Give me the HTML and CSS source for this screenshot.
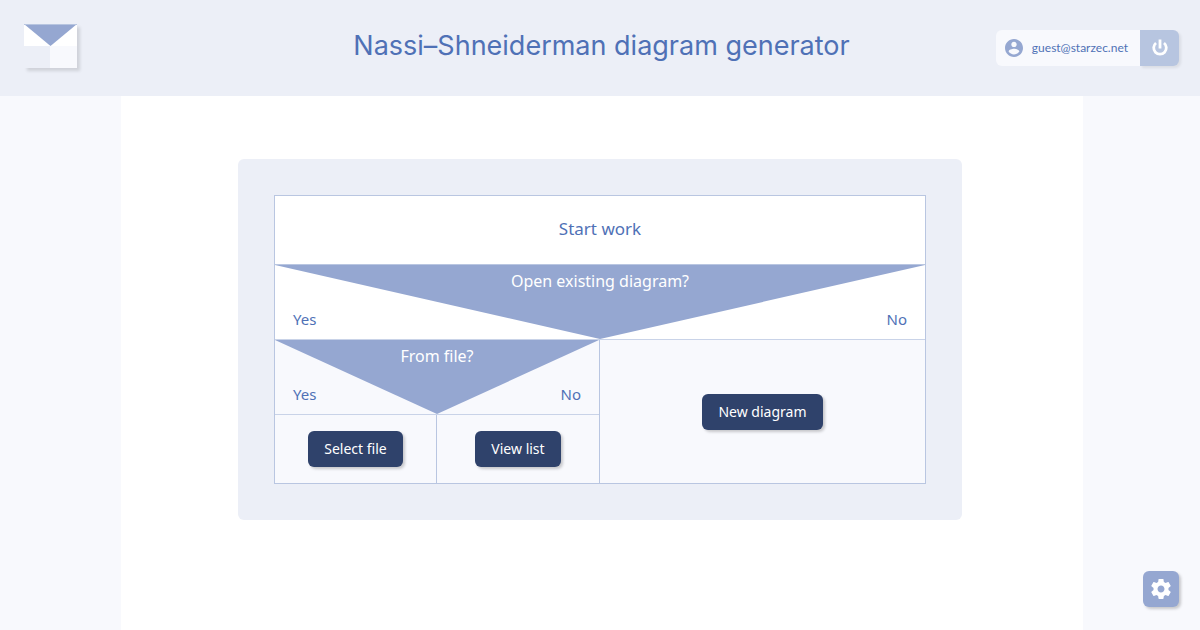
FILE: index.html
```html
<!DOCTYPE html>
<html lang="en">
<head>
<meta charset="utf-8">
<meta name="viewport" content="width=device-width, initial-scale=1">
<title>Nassi–Shneiderman diagram generator</title>
<link rel="stylesheet" href="styles.css">
</head>
<body>
<header class="header">
  <a class="logo" href="#" aria-label="Home">
    <svg class="logo-mark" viewBox="0 0 53 44" width="53" height="44" aria-hidden="true">
      <rect width="53" height="22" fill="#fff"/>
      <rect y="22" width="26" height="22" fill="#eceff7"/>
      <rect x="26" y="22" width="27" height="22" fill="#f8f9fd"/>
      <path d="M0 0H53L26.500 22Z" fill="#95a7d1"/>
      <path d="M0 .5H53" stroke="#b7c5e0"/>
    </svg>
  </a>
  <h1 class="title">Nassi–Shneiderman diagram generator</h1>
  <div class="account">
    <span class="user">
      <svg viewBox="2 2 20 20" width="18" height="18" aria-hidden="true"><path fill="#95a7d1" d="M12 2C6.480 2 2 6.480 2 12s4.480 10 10 10 10-4.480 10-10S17.520 2 12 2zm0 3c1.660 0 3 1.340 3 3s-1.340 3-3 3-3-1.340-3-3 1.340-3 3-3zm0 14.200c-2.500 0-4.710-1.280-6-3.220.030-1.990 4-3.080 6-3.080 1.990 0 5.970 1.090 6 3.080-1.290 1.940-3.500 3.220-6 3.220z"/></svg>
      guest@starzec.net
    </span>
    <button class="logout" type="button" aria-label="Log out">
      <svg viewBox="0 0 20 20" width="20" height="20" fill="none" stroke="#fff" stroke-width="2.800" aria-hidden="true"><path d="M10 1.500V10.500"/><path d="M6 5A6.300 6.300 0 1 0 14 5"/></svg>
    </button>
  </div>
</header>
<main class="main">
  <section class="panel">
    <div class="chart">
      <div class="start">Start work</div>
      <div class="condition">
        <svg class="wedge" viewBox="0 0 100 100" preserveAspectRatio="none" aria-hidden="true"><path d="M0 0H100L50 100Z" fill="#95a7d1"/></svg>
        <span class="question">Open existing diagram?</span>
        <span class="yes">Yes</span>
        <span class="no">No</span>
      </div>
      <div class="branches">
        <div class="branch">
          <div class="condition">
            <svg class="wedge" viewBox="0 0 100 100" preserveAspectRatio="none" aria-hidden="true"><path d="M0 0H100L50 100Z" fill="#95a7d1"/></svg>
            <span class="question">From file?</span>
            <span class="yes">Yes</span>
            <span class="no">No</span>
          </div>
          <div class="branches">
            <div class="branch leaf"><button class="btn" type="button">Select file</button></div>
            <div class="branch leaf"><button class="btn" type="button">View list</button></div>
          </div>
        </div>
        <div class="branch leaf"><button class="btn" type="button">New diagram</button></div>
      </div>
    </div>
  </section>
</main>
<button class="settings" type="button" aria-label="Settings">
  <svg viewBox="0 0 24 24" width="24" height="24" aria-hidden="true"><path fill="#fff" d="M19.430 12.980c.040-.320.070-.640.070-.980s-.030-.660-.070-.980l2.110-1.650c.190-.150.240-.420.120-.640l-2-3.460c-.120-.220-.390-.300-.610-.220l-2.490 1c-.520-.400-1.080-.730-1.690-.980l-.380-2.650C14.460 2.180 14.250 2 14 2h-4c-.250 0-.460.180-.490.420l-.380 2.650c-.610.250-1.170.590-1.690.980l-2.490-1c-.230-.090-.490 0-.610.220l-2 3.460c-.130.220-.070.490.120.640l2.110 1.650c-.040.320-.070.650-.070.980s.030.660.070.980l-2.110 1.650c-.190.150-.240.420-.120.640l2 3.460c.120.220.390.300.610.220l2.490-1c.520.400 1.080.730 1.690.980l.380 2.650c.030.240.240.420.490.420h4c.250 0 .460-.180.490-.420l.380-2.650c.610-.250 1.170-.590 1.690-.980l2.490 1c.230.090.490 0 .610-.220l2-3.460c.120-.220.070-.490-.120-.640l-2.110-1.650zM12 15.500c-1.930 0-3.500-1.570-3.500-3.500s1.570-3.500 3.500-3.500 3.500 1.570 3.500 3.500-1.570 3.500-3.500 3.500z"/></svg>
</button>
</body>
</html>
```
FILE: styles.css
```css
* {
  box-sizing: border-box;
}

body {
  display: flex;
  flex-direction: column;
  min-height: 100vh;
  margin: 0;
  background: #f8f9fd;
  color: #4f71b6;
  font-family: "Noto Sans", sans-serif;
  font-size: 16px;
  line-height: 24px;
}

button {
  border: 0;
  font: inherit;
  cursor: pointer;
}

svg {
  display: block;
}

.header {
  display: grid;
  grid-template-columns: 1fr auto 1fr;
  align-items: start;
  min-height: 96px;
  padding: 24px 21px 24px 24px;
  background: #eceff7;
}

.logo {
  justify-self: start;
}

.logo-mark {
  box-shadow: 3px 3px 3px rgba(0, 0, 0, 0.12);
}

.title {
  margin: 0;
  font-family: Inter, sans-serif;
  font-size: 27px;
  font-weight: 400;
  line-height: 44px;
}

.account {
  display: flex;
  align-self: center;
  justify-self: end;
  border-radius: 6px;
}

.user {
  display: flex;
  align-items: center;
  gap: 9px;
  height: 36px;
  padding: 0 12px 0 9px;
  border-radius: 6px 0 0 6px;
  background: #f8f9fd;
  font-family: Lato, sans-serif;
  font-size: 12px;
}

.logout {
  display: grid;
  place-items: center;
  width: 39px;
  height: 36px;
  padding: 0;
  border-radius: 0 6px 6px 0;
  background: #b7c5e0;
  box-shadow: 2px 2px 3px rgba(0, 0, 0, 0.08);
}

.main {
  display: flex;
  flex: 1;
  justify-content: center;
  align-items: flex-start;
  padding: 63px 24px;
  background: linear-gradient(to right, #f8f9fd 121px, #fff 121px calc(100% - 117px), #f8f9fd calc(100% - 117px));
}

.panel {
  width: 100%;
  max-width: 724px;
  padding: 36px;
  border-radius: 6px;
  background: #eceff7;
}

.chart {
  border: 1px solid #b9c6e1;
  background: #fff;
}

.start {
  display: grid;
  place-items: center;
  min-height: 69px;
  padding-bottom: 2px;
  border-bottom: 1px solid #b9c6e1;
  font-size: 17px;
}

.condition {
  display: grid;
  grid-template: 1fr 1fr / 1fr 1fr;
  height: 75px;
  border-bottom: 1px solid #c9d3e8;
}

.wedge {
  grid-area: 1 / 1 / 3 / 3;
  width: 100%;
  height: 74px;
}

.question {
  grid-area: 1 / 1 / 2 / 3;
  justify-self: center;
  padding-top: 4px;
  color: #fff;
}

.yes,
.no {
  align-self: end;
  padding: 0 18px 8px;
  font-size: 15px;
}

.yes {
  grid-area: 2 / 1;
}

.no {
  grid-area: 2 / 2;
  justify-self: end;
}

.branches {
  display: grid;
  grid-template-columns: 1fr 1fr;
}

.branch {
  background: #f8f9fd;
}

.branch:first-child {
  border-right: 1px solid #b9c6e1;
}

.leaf {
  display: grid;
  place-items: center;
  min-height: 68px;
}

.btn {
  height: 36px;
  padding: 0 16px;
  border-radius: 6px;
  background: #2f426b;
  box-shadow: 2px 2px 3px rgba(0, 0, 0, 0.2);
  color: #fff;
  font-size: 14px;
}

.settings {
  position: fixed;
  right: 21px;
  bottom: 23px;
  display: grid;
  place-items: center;
  width: 36px;
  height: 36px;
  padding: 0;
  border-radius: 6px;
  background: #95a7d1;
  box-shadow: 2px 2px 3px rgba(0, 0, 0, 0.2);
}
```
